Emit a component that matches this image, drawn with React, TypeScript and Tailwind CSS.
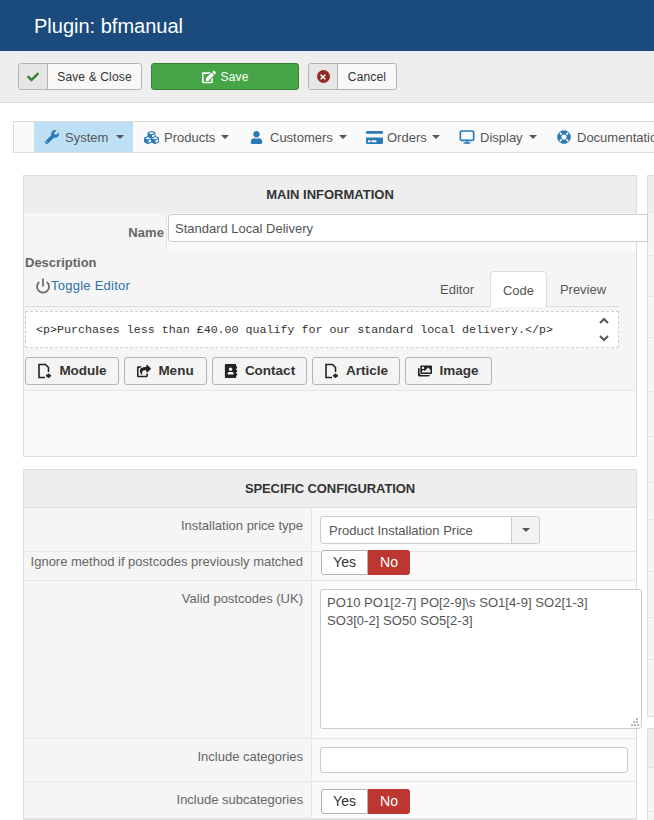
import { Monitor, Power } from 'lucide-react';
import { FaAddressBook, FaCheck, FaCreditCard, FaCubes, FaEdit, FaImages, FaLifeRing, FaShareSquare, FaTimes, FaUser, FaWrench } from 'react-icons/fa';

const font = "font-['Liberation_Sans',Arial,sans-serif]";
const sideRows = ['h-[37px]', 'h-[43px]', 'h-[41px]', 'h-[41px]', 'h-[54px]', 'h-[45px]', 'h-[46px]', 'h-[37px]', 'h-[52px]', 'h-[46px]', 'h-[42px]'];

function Caret({ className = '' }: { className?: string }) {
  return <span className={`inline-block w-0 h-0 border-x-4 border-x-transparent border-t-4 border-t-[#555] ${className}`} />;
}

function NavItem({ icon, label, width, gap, pad, active }: { icon: React.ReactNode; label: string; width: string; gap: string; pad: string; active?: boolean }) {
  return (
    <div className={`flex items-center h-[30px] shrink-0 pr-[9px] text-[13px] text-[#555] whitespace-nowrap ${width} ${pad} ${active ? 'bg-[#bde0f5]' : ''}`}>
      <span className={`text-[#2a7ab8] flex shrink-0 ${gap}`}>{icon}</span>
      <span className="pt-[1px]">{label}</span>
      {label !== 'Documentation' && <Caret className="ml-auto" />}
    </div>
  );
}

function FileAdd() {
  return (
    <svg width="15" height="16" viewBox="0 0 15 16" fill="none" stroke="#222" strokeWidth="1.6">
      <path d="M8 14.5H2V1.5h6.5l3 3V9" />
      <path d="M11.5 10.5v4.5M9 12.75h5" strokeWidth="1.8" />
    </svg>
  );
}

function EditorButton({ icon, label, width }: { icon: React.ReactNode; label: string; width: string }) {
  return (
    <div className={`flex items-center justify-center gap-[7px] h-[28px] ${width} rounded-[3px] border border-[#b3b3b3] bg-[#f4f4f4] text-[13.5px] font-bold text-[#333]`}>
      {icon}
      <span className="pt-[1px]">{label}</span>
    </div>
  );
}

function YesNo() {
  return (
    <div className="relative flex w-[89px] h-[25px] ml-[1px] text-[14px]">
      <div className="w-[47px] flex items-center justify-center bg-white border border-[#b3b3b3] rounded-l-[3px] text-[#333]">Yes</div>
      <div className="w-[42px] flex items-center justify-center bg-[#bd362f] rounded-r-[3px] text-white">No</div>
    </div>
  );
}

function Row({ label, height, labelPad = 'pt-[8px]', children }: { label: string; height: string; labelPad?: string; children: React.ReactNode }) {
  return (
    <div className={`flex ${height} border-b border-[#e6e6e6]`}>
      <div className={`w-[288px] shrink-0 bg-[#f5f5f5] border-r border-[#e6e6e6] text-right pr-[8px] text-[13px] leading-[20px] text-[#666] whitespace-nowrap ${labelPad}`}>
        {label}
      </div>
      <div className="flex-1 pl-[8px] pt-[8px] min-w-0">{children}</div>
    </div>
  );
}

export default function App() {
  return (
    <div className={`w-[654px] h-[820px] overflow-hidden bg-white ${font}`}>
      <header className="h-[51px] bg-[#1a4b7c] flex items-center pl-[34px] text-[20px] text-white">Plugin: bfmanual</header>

      <div className="h-[52px] bg-[#eeeeee] border-b border-[#dcdcdc] flex items-center pl-[18px] text-[12px] tracking-[0.15px]">
        <div className="flex h-[27px] w-[124px] rounded-[3px] border border-[#b3b3b3] bg-[#f8f8f8] text-[#333]">
          <div className="w-[29px] flex items-center justify-center bg-[#e6e6e6] border-r border-[#b3b3b3] rounded-l-[3px]">
            <FaCheck size={12} className="text-[#378137]" />
          </div>
          <div className="flex-1 flex items-center justify-center">Save &amp; Close</div>
        </div>
        <div className="ml-[9px] flex h-[27px] w-[148px] items-center justify-center gap-[5px] rounded-[3px] border border-[#378137] bg-[#46a546] text-white">
          <FaEdit size={14} />
          Save
        </div>
        <div className="ml-[9px] flex h-[27px] w-[89px] rounded-[3px] border border-[#b3b3b3] bg-[#f8f8f8] text-[#333]">
          <div className="w-[29px] flex items-center justify-center bg-[#e6e6e6] border-r border-[#b3b3b3] rounded-l-[3px]">
            <span className="w-[13px] h-[13px] rounded-full bg-[#942a25] flex items-center justify-center">
              <FaTimes size={8} className="text-white" />
            </span>
          </div>
          <div className="flex-1 flex items-center justify-center">Cancel</div>
        </div>
      </div>

      <div className="mt-[18px] ml-[13px] h-[32px] border border-[#dcdcdc] border-r-0 bg-[#fafafa] flex pl-[20px] overflow-hidden">
        <NavItem icon={<FaWrench size={14} />} label="System" width="w-[99px]" pad="pl-[11px]" gap="w-[20px]" active />
        <NavItem icon={<FaCubes size={15} />} label="Products" width="w-[105px]" pad="pl-[11px]" gap="w-[20px]" />
        <NavItem icon={<FaUser size={13} />} label="Customers" width="w-[118px]" pad="pl-[12px]" gap="w-[20px]" />
        <NavItem icon={<FaCreditCard size={17} />} label="Orders" width="w-[93px]" pad="pl-[10px]" gap="w-[21px]" />
        <NavItem icon={<Monitor size={16} strokeWidth={2.5} />} label="Display" width="w-[97px]" pad="pl-[10px]" gap="w-[21px]" />
        <NavItem icon={<FaLifeRing size={14} />} label="Documentation" width="w-[130px]" pad="pl-[11px]" gap="w-[20px]" />
      </div>

      <div className="mt-[22px] ml-[23px] flex items-start">
        <div className="w-[614px] shrink-0">
          <section className="h-[282px] border border-[#dcdcdc] bg-[#fafafa]">
            <div className="h-[37px] bg-[#eeeeee] flex items-center justify-center text-[13px] font-bold text-[#333]">MAIN INFORMATION</div>
            <div className="h-[39px] flex">
              <div className="w-[143px] bg-[#f5f5f5] border-r border-[#e6e6e6] flex items-center justify-end pr-[2px] pt-[1px] text-[13px] tracking-[0.1px] font-bold text-[#666]">Name</div>
              <div className="relative">
                <div className="absolute left-[1px] top-[1px] w-[480px] h-[28px] rounded-l-[3px] border border-[#ccc] bg-white flex items-center pl-[6px] pt-[1px] text-[13px] text-[#555]">
                  Standard Local Delivery
                </div>
              </div>
            </div>
            <div className="h-[139px] bg-[#f5f5f5] border-b border-[#e6e6e6] px-[1px]">
              <div className="flex justify-between h-[55px] relative border-b border-[#dcdcdc] mr-[16px]">
                <div>
                  <div className="pt-[3px] text-[13px] leading-[16px] font-bold text-[#666]">Description</div>
                  <div className="flex items-center pl-[10px] mt-[5px] text-[13px] tracking-[0.25px] text-[#3071a9]">
                    <Power size={16} strokeWidth={2.5} className="text-[#666]" />
                    Toggle Editor
                  </div>
                </div>
                <div className="flex items-end text-[13px] text-[#555]">
                  <div className="h-[35px] w-[66px] pt-[2px] flex items-center justify-center">Editor</div>
                  <div className="h-[36px] w-[57px] -mb-[1px] pt-[2px] flex items-center justify-center bg-white border border-b-0 border-[#dcdcdc] rounded-t-[4px]">Code</div>
                  <div className="h-[35px] w-[72px] pt-[2px] flex items-center justify-center">Preview</div>
                </div>
              </div>
              <div className="relative mt-[4px] mr-[16px] h-[37px] border border-dashed border-[#cfcfcf] bg-white flex items-center pl-[10px] font-['Liberation_Mono',monospace] text-[11.65px] text-[#333] whitespace-nowrap">
                &lt;p&gt;Purchases less than £40.00 qualify for our standard local delivery.&lt;/p&gt;
                <span className="absolute right-[9px] top-[2px] flex">
                  <svg width="10" height="30" viewBox="0 0 10 30" fill="none" stroke="#555" strokeWidth="2"><path d="M1 9l4-4 4 4M1 22l4 4 4-4" /></svg>
                </span>
              </div>
              <div className="flex gap-[5px] mt-[9px]">
                <EditorButton icon={<FileAdd />} label="Module" width="w-[94px]" />
                <EditorButton icon={<FaShareSquare size={14} className="text-[#222]" />} label="Menu" width="w-[83px]" />
                <EditorButton icon={<FaAddressBook size={14} className="text-[#222]" />} label="Contact" width="w-[95px]" />
                <EditorButton icon={<FileAdd />} label="Article" width="w-[88px]" />
                <EditorButton icon={<FaImages size={14} className="text-[#222]" />} label="Image" width="w-[87px]" />
              </div>
            </div>
          </section>

          <section className="mt-[12px] border border-[#dcdcdc] bg-[#fafafa]">
            <div className="h-[38px] bg-[#eeeeee] border-b border-[#dcdcdc] flex items-center justify-center text-[13px] tracking-[-0.1px] font-bold text-[#333]">SPECIFIC CONFIGURATION</div>
            <Row label="Installation price type" height="h-[44px]">
              <div className="flex w-[220px] h-[28px] rounded-[3px] border border-[#ccc] bg-white text-[13px] text-[#555]">
                <div className="flex-1 flex items-center pl-[8px] pt-[1px]">Product Installation Price</div>
                <div className="w-[28px] flex items-center justify-center bg-[#f2f2f2] border-l border-[#ccc] rounded-r-[3px]"><Caret /></div>
              </div>
            </Row>
            <Row label="Ignore method if postcodes previously matched" height="h-[29px]" labelPad="pt-0">
              <div className="-mt-[10px]"><YesNo /></div>
            </Row>
            <Row label="Valid postcodes (UK)" height="h-[158px]">
              <div className="relative w-[322px] h-[140px] rounded-[3px] border border-[#ccc] bg-white pl-[6px] pt-[4px] text-[13px] tracking-[0.05px] leading-[18px] text-[#555]">
                PO10 PO1[2-7] PO[2-9]\s SO1[4-9] SO2[1-3]
                <br />
                SO3[0-2] SO50 SO5[2-3]
                <svg className="absolute right-[2px] bottom-[2px]" width="8" height="8" viewBox="0 0 8 8" fill="#b5b5b5">
                  <path d="M5 0h2v2H5zM2 3h2v2H2zM5 3h2v2H5zM0 6h2v2H0zM3 6h2v2H3zM6 6h2v2H6z" />
                </svg>
              </div>
            </Row>
            <Row label="Include categories" height="h-[43px]">
              <div className="w-[308px] h-[26px] rounded-[3px] border border-[#ccc] bg-white" />
            </Row>
            <Row label="Include subcategories" height="h-[37px]">
              <div className="-mt-[1px]"><YesNo /></div>
            </Row>
          </section>
        </div>
        <div className="ml-[10px] flex-1 min-w-0">
          <div className="h-[542px] border-l border-y border-[#dcdcdc] bg-[#f5f5f5]">
            {sideRows.map((rowHeight, i) => (
              <div key={i} className={`${rowHeight} border-b border-[#e6e6e6] ${i === 0 ? 'bg-[#eeeeee]' : ''}`} />
            ))}
          </div>
          <div className="mt-[11px] h-[200px] border-l border-t border-[#dcdcdc] bg-[#f5f5f5]">
            <div className="h-[39px] bg-[#eeeeee] border-b border-[#e6e6e6]" />
            <div className="h-[44px] border-b border-[#e6e6e6]" />
          </div>
        </div>
      </div>
    </div>
  );
}
